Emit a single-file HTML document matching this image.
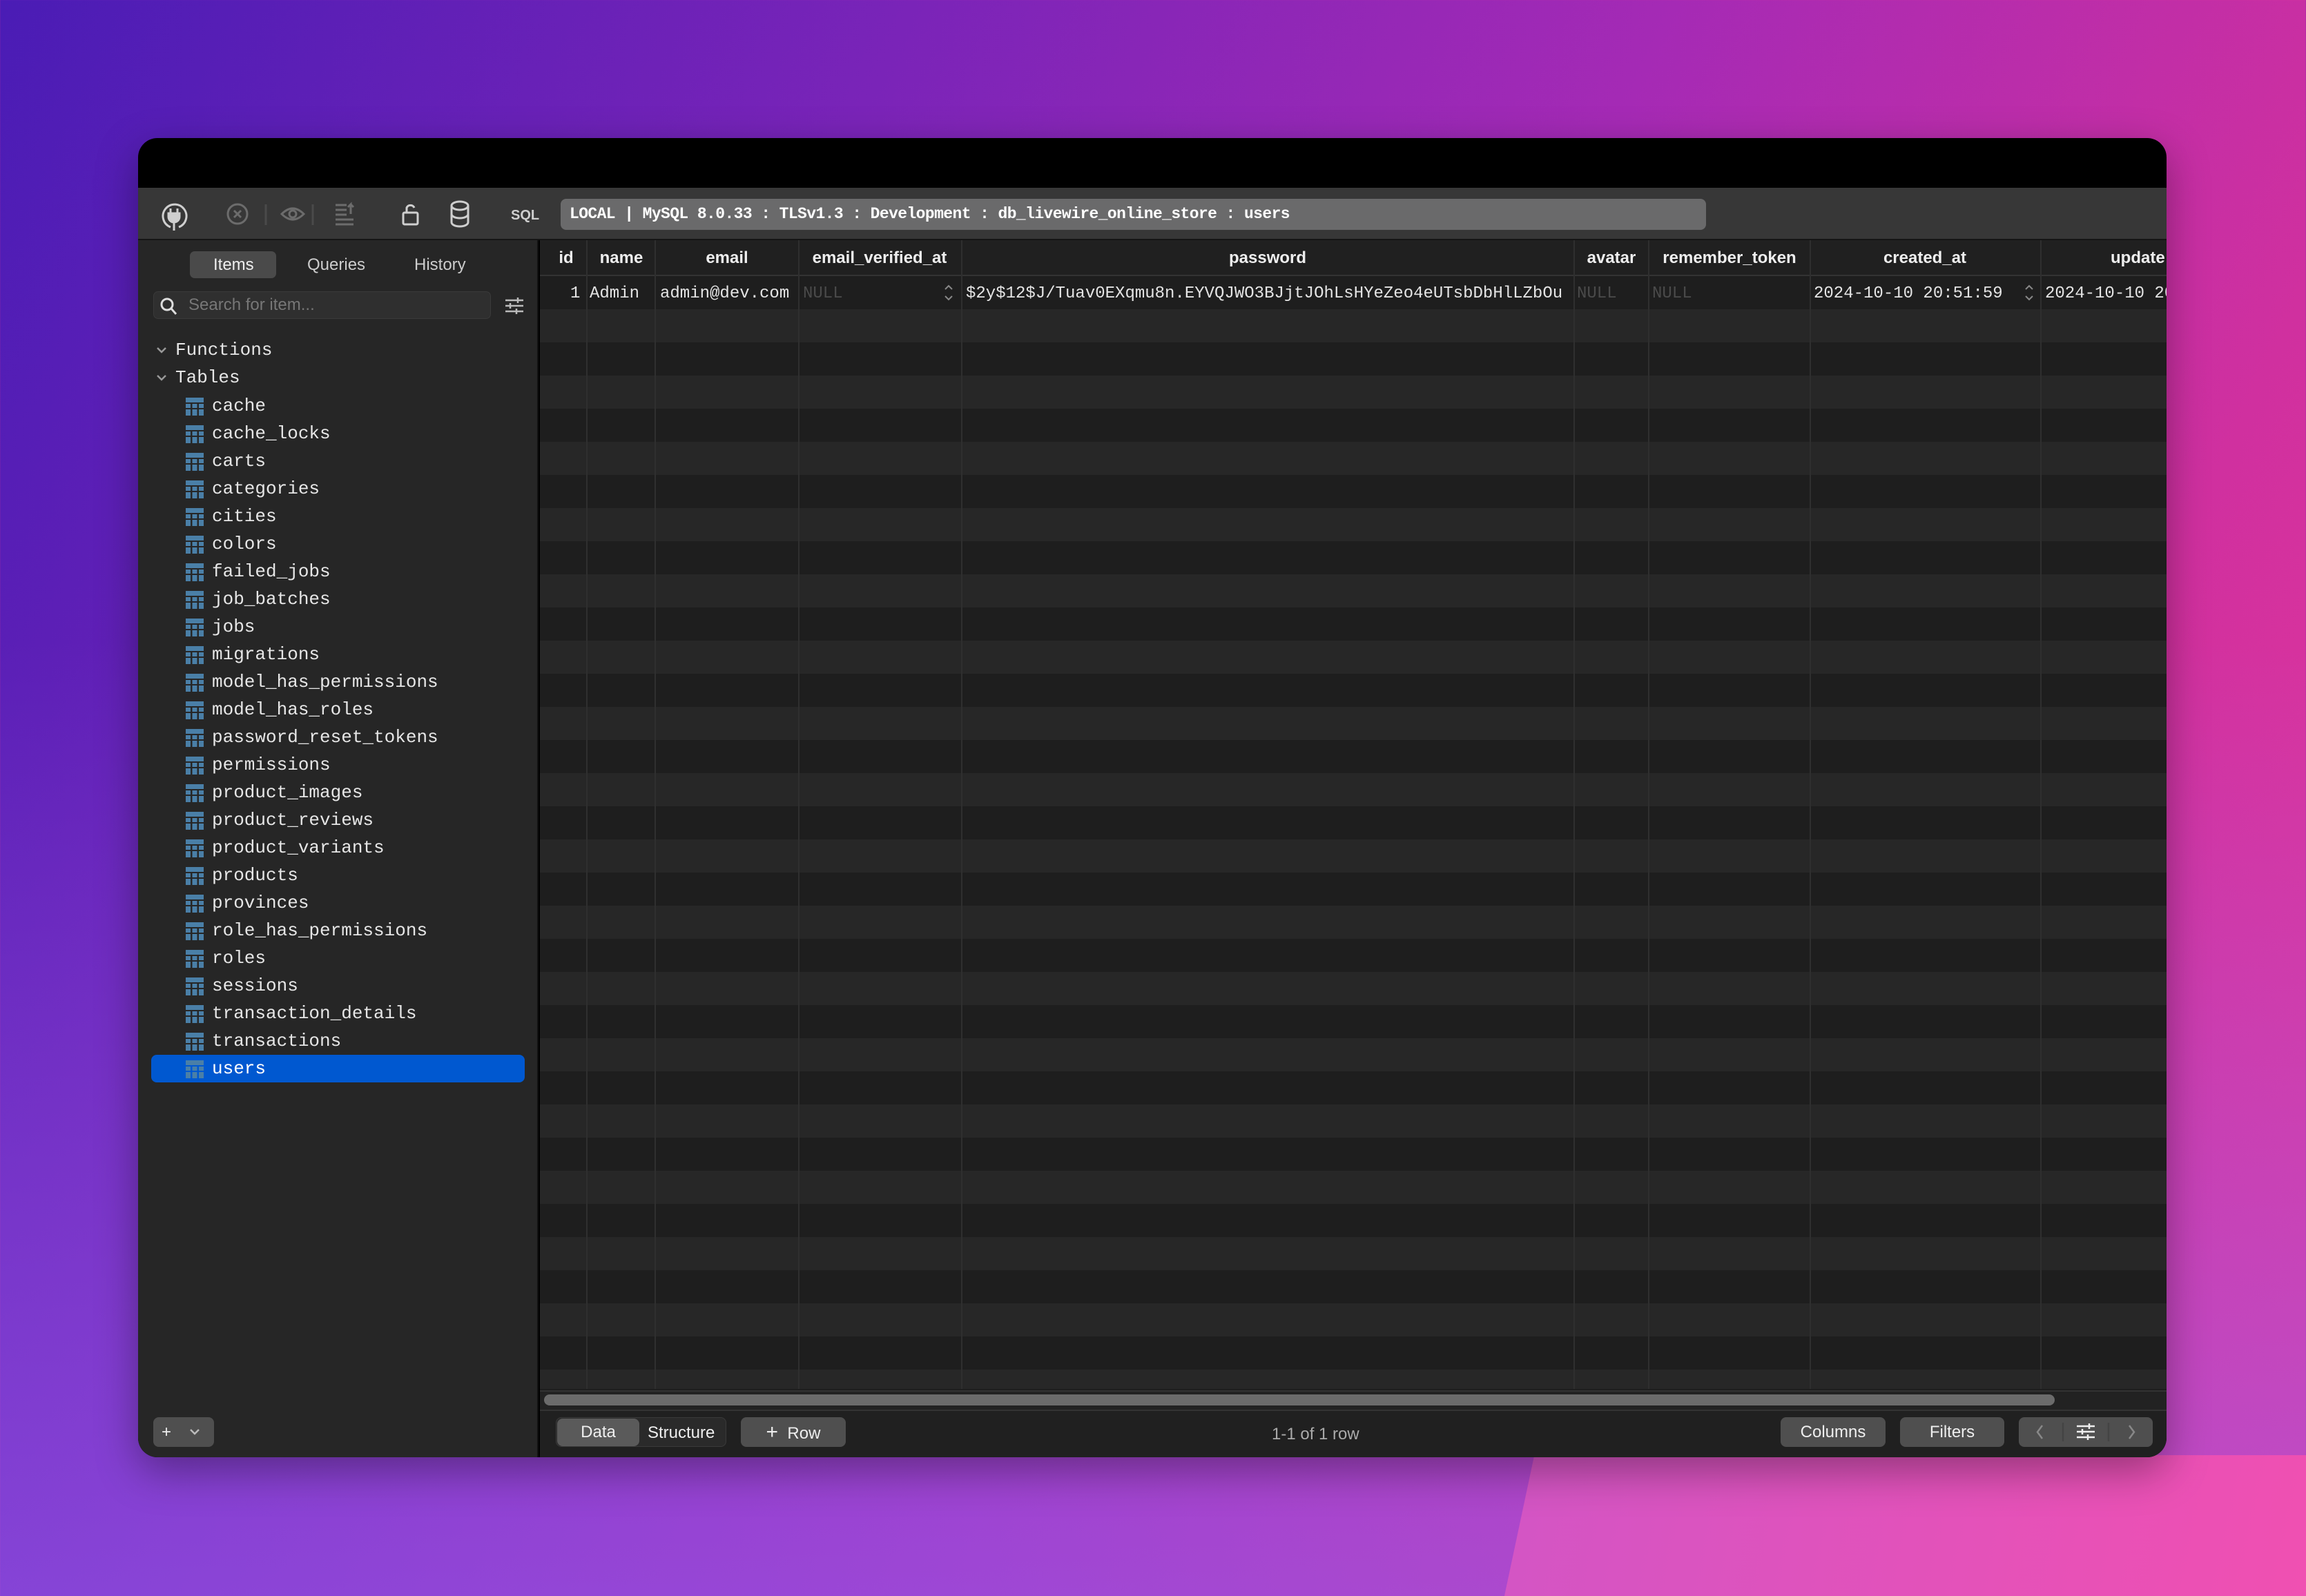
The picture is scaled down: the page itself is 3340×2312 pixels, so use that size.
<!DOCTYPE html>
<html style="width:3340px;height:2312px;overflow:hidden"><head><meta charset="utf-8"><style>
*{margin:0;padding:0;box-sizing:border-box}
body{width:3340px;height:2312px;overflow:hidden;position:relative;
background:linear-gradient(115deg,#4a1cb5 0%,#7a24b8 30%,#a52ab5 55%,#d0309f 80%,#e8389a 100%);
font-family:"Liberation Sans",sans-serif;}
.ov{position:absolute;left:0;top:0;width:3340px;height:2312px;background:linear-gradient(180deg,rgba(140,90,240,0) 40%,rgba(150,95,240,.55) 100%)}
.glow{position:absolute;left:2200px;top:2108px;width:1250px;height:210px;background:linear-gradient(90deg,#d455c4,#f24fb0);transform:skewX(-12deg)}
.a{position:absolute}
.win{position:absolute;left:200px;top:200px;width:2938px;height:1911px;border-radius:28px;background:#000;overflow:hidden;box-shadow:0 20px 60px rgba(0,0,0,.35)}
.mono{font-family:"Liberation Mono",monospace}
.tb{left:0;top:72px;width:2938px;height:76px;background:#373737;border-bottom:2px solid #151515}
.side{left:0;top:148px;width:580px;height:1763px;background:#262626;border-right:2px solid #111}
.tree{font-family:"Liberation Mono",monospace;font-size:26px;color:#e6e6e6}
.ti{position:absolute;left:107px;height:40px;line-height:40px;white-space:nowrap}
.ti i{position:absolute;left:-38px;top:8px;width:26px;height:26px;background:
linear-gradient(#4a7fa7 0 0) 0 0/26px 7px no-repeat,
repeating-linear-gradient(90deg,#4a7fa7 0 7px,transparent 7px 9.5px);
-webkit-mask:linear-gradient(#000 0 7px,transparent 7px 9px,#000 9px 15px,transparent 15px 17px,#000 17px 26px)}
.grid{left:582px;top:148px;width:2356px;height:1716px;background:#1e1e1e;overflow:hidden}
.hdr{position:absolute;top:0;left:0;width:100%;height:52px;background:#202020;border-bottom:2px solid #333;font-size:24px;color:#eee;font-weight:bold}
.hdr span{position:absolute;top:12px;transform:translateX(-50%);white-space:nowrap}
.body{position:absolute;top:52px;left:0;width:100%;height:1612px;background:repeating-linear-gradient(#1e1e1e 0 48px,#272727 48px 96px)}
.vl{position:absolute;top:0;width:2px;height:1664px;background:#2f2f2f}
.hv{position:absolute;top:10px;width:2px;height:32px;background:#3a3a3a}
.cell{position:absolute;top:64px;font-family:"Liberation Mono",monospace;font-size:24px;color:#e4e4e4;white-space:nowrap}
.null{color:#4a4a4a}
.btn{position:absolute;height:43px;background:#5a5a5a;border-radius:8px;color:#eee;font-size:24px;line-height:43px;text-align:center}
</style></head><body>
<div class="ov"></div><div class="glow"></div>
<div class="win">
 <div class="a tb">
  <svg class="a" style="left:0;top:0" width="2938" height="76" fill="none" stroke-width="3">
   <g stroke="#cfcfcf"><path d="M47 57 A17 17 0 1 1 59 57"/><path d="M47 30v7M57 30v7M44 37h16v5a8 8 0 0 1-16 0z M52 50v12" fill="#cfcfcf"/></g>
   <g stroke="#6c6c6c"><circle cx="144" cy="38" r="14"/><path d="M139 33l10 10M149 33l-10 10"/><path d="M185 24v30M253 24v30" stroke="#4a4a4a"/>
   <path d="M208 38q16-16 32 0q-16 16-32 0z"/><circle cx="224" cy="38" r="5"/>
   <path d="M286 25h16M286 32h16M286 39h16M286 46h26M286 53h26M308 38v-14l-4 4M308 24l4 4"/></g>
   <g stroke="#cfcfcf"><rect x="384" y="36" width="21" height="17" rx="2"/><path d="M389 36v-7a6 6 0 0 1 11 0"/>
   <ellipse cx="466" cy="26" rx="12" ry="6"/><path d="M454 26v24a12 6 0 0 0 24 0v-24M454 38a12 6 0 0 0 24 0"/></g>
   <text x="540" y="46" fill="#cfcfcf" stroke="none" font-family="Liberation Sans" font-weight="bold" font-size="20">SQL</text>
   <circle cx="1321" cy="38" r="14" stroke="#e9c21d"/><path d="M1321 30v10M1321 44v2" stroke="#e9c21d"/>
   <g stroke="#9a9a9a" stroke-width="2.5"><path d="M1393 52h32M1396 50v-8M1401 50v-12M1406 50v-8M1411 50v-14M1416 50v-10M1421 50v-18M1396 38l8-8 7 4 10-10"/></g>
   <g stroke="#bdbdbd"><path d="M1488 30a11 11 0 1 0 8 4M1496 27v8h-7"/><circle cx="1573" cy="35" r="10"/><path d="M1580 42l7 8"/></g>
   <g fill="#bdbdbd" stroke="none"><circle cx="1657" cy="26" r="3.5"/><circle cx="1657" cy="38" r="3.5"/><circle cx="1657" cy="50" r="3.5"/></g>
   <rect x="1725" y="27" width="35" height="26" stroke="#2a7bdc"/><rect x="1729" y="31" width="7" height="18" fill="#2a7bdc" stroke="none"/>
   <path d="M1777 28v24M1857 28v24" stroke="#4a4a4a"/>
   <rect x="1800" y="27" width="35" height="26" stroke="#aaa"/><rect x="1804" y="41" width="27" height="8" fill="#aaa" stroke="none"/>
   <rect x="1874" y="27" width="35" height="26" stroke="#aaa"/><rect x="1898" y="31" width="7" height="18" fill="#aaa" stroke="none"/>
  </svg>
  <div class="a mono" style="left:612px;top:16px;width:1659px;height:45px;background:#6a6a6b;border-radius:8px;color:#fff;font-size:23px;font-weight:bold;line-height:45px;padding-left:13px;letter-spacing:-0.6px">LOCAL | MySQL 8.0.33 : TLSv1.3 : Development : db_livewire_online_store : users</div>
 </div>
 <div class="a side">
  <div class="a" style="left:75px;top:16px;width:125px;height:39px;background:#4a4a4a;border-radius:7px"></div>
  <div class="a" style="top:22px;left:0;width:580px;font-size:24px;color:#ccc">
   <span class="a" style="left:109px;color:#eee">Items</span><span class="a" style="left:245px">Queries</span><span class="a" style="left:400px">History</span></div>
  <div class="a" style="left:22px;top:74px;width:489px;height:40px;background:#2f2f2f;border:1px solid #3a3a3a;border-radius:7px;color:#777;font-size:24px;line-height:38px;padding-left:50px">Search for item...</div>
  <svg class="a" style="left:30px;top:82px" width="30" height="30" fill="none" stroke="#ddd" stroke-width="3"><circle cx="12" cy="11" r="8"/><path d="M18 17l7 8"/></svg>
  <svg class="a" style="left:530px;top:80px" width="30" height="30" fill="none" stroke="#bbb" stroke-width="2.5"><path d="M2 7h26M2 15h26M2 23h26M20 3v8M9 11v8M18 19v8"/></svg>
  <svg class="a" style="left:26px;top:152px" width="16" height="60" fill="none" stroke="#999" stroke-width="2.5"><path d="M2 4l6 6 6-6M2 44l6 6 6-6"/></svg>
 </div>
 <div class="a grid">
  <div class="hdr">
   <span style="left:38px">id</span><span style="left:118px">name</span><span style="left:271px">email</span><span style="left:492px">email_verified_at</span><span style="left:1054px">password</span><span style="left:1552px">avatar</span><span style="left:1723px">remember_token</span><span style="left:2006px">created_at</span><span style="left:2275px;transform:none">update</span>
   <div class="hv" style="left:67px"></div><div class="hv" style="left:166px"></div><div class="hv" style="left:374px"></div><div class="hv" style="left:610px"></div><div class="hv" style="left:1497px"></div><div class="hv" style="left:1605px"></div><div class="hv" style="left:1839px"></div><div class="hv" style="left:2173px"></div>
  </div>
  <div class="body"></div>
  <div class="vl" style="left:67px"></div><div class="vl" style="left:166px"></div><div class="vl" style="left:374px"></div><div class="vl" style="left:610px"></div><div class="vl" style="left:1497px"></div><div class="vl" style="left:1605px"></div><div class="vl" style="left:1839px"></div><div class="vl" style="left:2173px"></div>
  <div class="cell" style="left:44px">1</div>
  <div class="cell" style="left:72px">Admin</div>
  <div class="cell" style="left:174px">admin@dev.com</div>
  <div class="cell null" style="left:381px">NULL</div>
  <svg class="a" style="left:585px;top:62px" width="14" height="28" fill="none" stroke="#888" stroke-width="2"><path d="M2 9l5-5 5 5M2 19l5 5 5-5"/></svg>
  <div class="cell" style="left:617px">$2y$12$J/Tuav0EXqmu8n.EYVQJWO3BJjtJOhLsHYeZeo4eUTsbDbHlLZbOu</div>
  <div class="cell null" style="left:1502px">NULL</div>
  <div class="cell null" style="left:1611px">NULL</div>
  <div class="cell" style="left:1845px">2024-10-10 20:51:59</div>
  <svg class="a" style="left:2150px;top:62px" width="14" height="28" fill="none" stroke="#888" stroke-width="2"><path d="M2 9l5-5 5 5M2 19l5 5 5-5"/></svg>
  <div class="cell" style="left:2180px">2024-10-10 20:51:59</div>
 </div>
 <div class="a" style="left:582px;top:1814px;width:2356px;height:28px;background:#222;border-top:2px solid #333"></div>
 <div class="a" style="left:588px;top:1820px;width:2188px;height:16px;background:#6b6b6b;border-radius:8px"></div>
 <div class="a" style="left:582px;top:1842px;width:2356px;height:69px;background:#202020;border-top:2px solid #333"></div>
 <div class="btn" style="left:22px;top:1853px;width:88px;background:#4f4f4f;text-align:left;padding-left:12px">+</div>
 <svg class="a" style="left:74px;top:1866px" width="16" height="16" fill="none" stroke="#bbb" stroke-width="2.5"><path d="M2 5l6 6 6-6"/></svg>
 <div class="btn" style="left:605px;top:1853px;width:247px;background:#2a2a2a;border:1px solid #3a3a3a"></div>
 <div class="btn" style="left:607px;top:1855px;width:119px;height:40px;line-height:40px">Data</div>
 <div class="a" style="left:738px;top:1862px;font-size:24px;color:#eee">Structure</div>
 <div class="btn" style="left:873px;top:1853px;width:152px;background:#4f4f4f"><span style="font-size:30px">+</span>&nbsp; Row</div>
 <div class="a" style="left:1642px;top:1864px;font-size:24px;color:#aaa">1-1 of 1 row</div>
 <div class="btn" style="left:2379px;top:1853px;width:152px;background:#4f4f4f">Columns</div>
 <div class="btn" style="left:2552px;top:1853px;width:151px;background:#4f4f4f">Filters</div>
 <div class="btn" style="left:2724px;top:1853px;width:194px;background:#4f4f4f"></div>
 <svg class="a" style="left:2724px;top:1853px" width="194" height="43" fill="none" stroke-width="2.5">
  <path d="M34 12l-7 9.5 7 9.5M160 12l7 9.5-7 9.5" stroke="#888"/>
  <path d="M64 8v27M130 8v27" stroke="#444"/>
  <path d="M84 13h26M84 21h26M84 29h26M102 9v8M92 17v8M100 25v8" stroke="#eee"/>
 </svg>
</div>
<div class="a tree" style="left:200px;top:348px;width:580px;height:1200px">
 <div class="ti" style="left:54px;top:139px">Functions</div>
 <div class="ti" style="left:54px;top:179px">Tables</div>
 <div class="a" style="left:19px;top:1180px;width:541px;height:40px;background:#0058d0;border-radius:8px"></div>
 <div class="ti" style="top:220px"><i></i>cache</div>
 <div class="ti" style="top:260px"><i></i>cache_locks</div>
 <div class="ti" style="top:300px"><i></i>carts</div>
 <div class="ti" style="top:340px"><i></i>categories</div>
 <div class="ti" style="top:380px"><i></i>cities</div>
 <div class="ti" style="top:420px"><i></i>colors</div>
 <div class="ti" style="top:460px"><i></i>failed_jobs</div>
 <div class="ti" style="top:500px"><i></i>job_batches</div>
 <div class="ti" style="top:540px"><i></i>jobs</div>
 <div class="ti" style="top:580px"><i></i>migrations</div>
 <div class="ti" style="top:620px"><i></i>model_has_permissions</div>
 <div class="ti" style="top:660px"><i></i>model_has_roles</div>
 <div class="ti" style="top:700px"><i></i>password_reset_tokens</div>
 <div class="ti" style="top:740px"><i></i>permissions</div>
 <div class="ti" style="top:780px"><i></i>product_images</div>
 <div class="ti" style="top:820px"><i></i>product_reviews</div>
 <div class="ti" style="top:860px"><i></i>product_variants</div>
 <div class="ti" style="top:900px"><i></i>products</div>
 <div class="ti" style="top:940px"><i></i>provinces</div>
 <div class="ti" style="top:980px"><i></i>role_has_permissions</div>
 <div class="ti" style="top:1020px"><i></i>roles</div>
 <div class="ti" style="top:1060px"><i></i>sessions</div>
 <div class="ti" style="top:1100px"><i></i>transaction_details</div>
 <div class="ti" style="top:1140px"><i></i>transactions</div>
 <div class="ti" style="top:1180px;color:#fff"><i></i>users</div>
</div>
</body></html>
